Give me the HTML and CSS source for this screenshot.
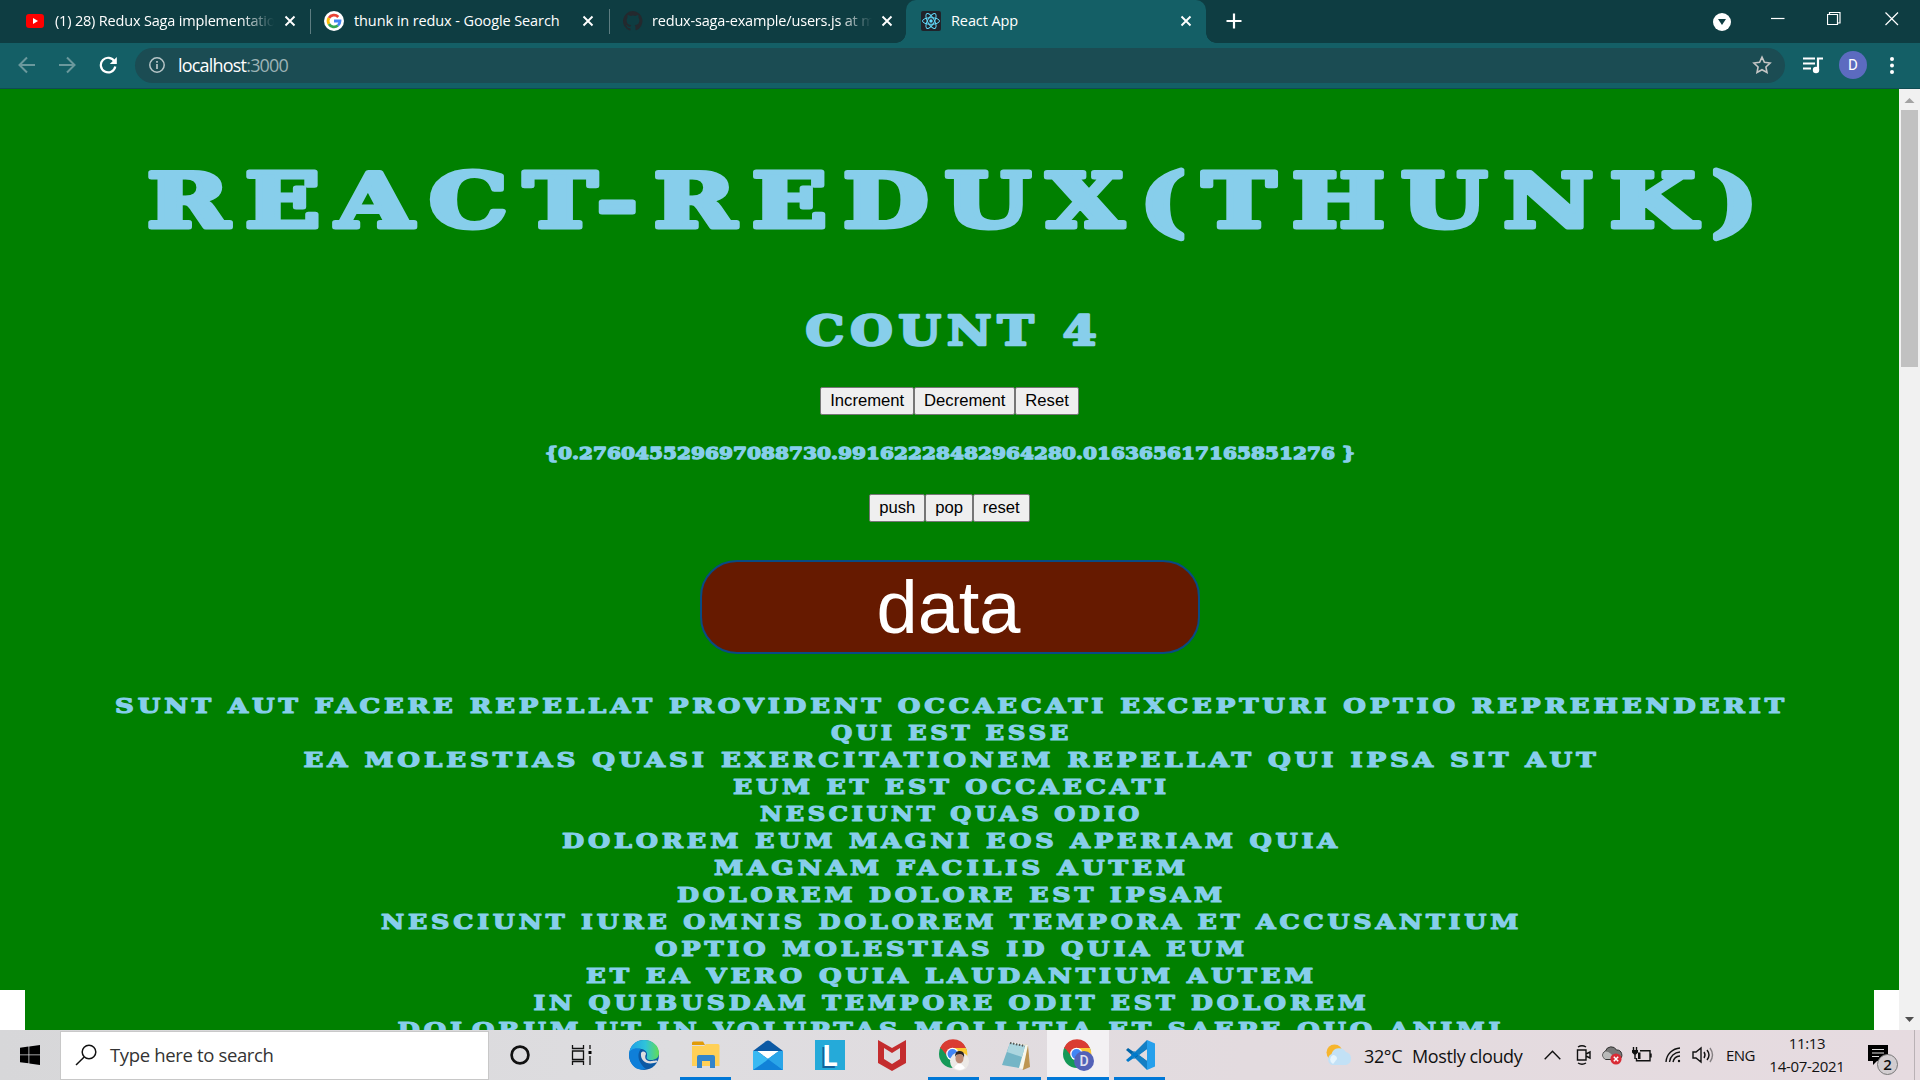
FILE: index.html
```html
<!DOCTYPE html>
<html lang="en">
<head>
<meta charset="utf-8">
<title>React App</title>
<link rel="stylesheet" href="styles.css">
</head>
<body>
<header class="tabs">
  <div class="tab t1">
    <svg width="18" height="14" viewBox="0 0 18 14"><rect width="18" height="14" rx="3" fill="#f00"/><path d="M7 4v6l5-3z" fill="#fff"/></svg>
    <span class="label fade">(1) 28) Redux Saga implementation</span>
    <svg class="x" viewBox="0 0 12 12"><path d="M1.500 1.500l9 9m0-9l-9 9"/></svg>
  </div>
  <div class="tab t2">
    <svg width="20" height="20" viewBox="0 0 20 20"><circle cx="10" cy="10" r="10" fill="#fff"/><g fill="none" stroke-width="2.800"><path d="M14.300 5.900A6 6 0 0 0 4.900 7" stroke="#ea4335"/><path d="M4.900 7a6 6 0 0 0 0 6" stroke="#fbbc05"/><path d="M4.900 13a6 6 0 0 0 9 1.500" stroke="#34a853"/><path d="M13.900 14.500A6 6 0 0 0 16 10H10" stroke="#4285f4"/></g></svg>
    <span class="label">thunk in redux - Google Search</span>
    <svg class="x" viewBox="0 0 12 12"><path d="M1.500 1.500l9 9m0-9l-9 9"/></svg>
  </div>
  <div class="tab t3">
    <svg width="20" height="20" viewBox="0 0 16 16"><path fill="#24292e" d="M8 0a8 8 0 0 0-2.530 15.590c.4.07.55-.17.55-.38v-1.500C3.800 14.200 3.300 12.600 3.300 12.600c-.36-.92-.89-1.170-.89-1.170-.72-.5.06-.48.06-.48.8.06 1.230.82 1.230.82.71 1.220 1.870.87 2.330.66.07-.52.28-.87.5-1.070-1.780-.2-3.640-.89-3.640-3.950 0-.87.31-1.590.82-2.150-.08-.2-.36-1.020.08-2.120 0 0 .67-.22 2.200.82a7.600 7.600 0 0 1 4 0c1.530-1.040 2.200-.82 2.200-.82.44 1.100.16 1.920.08 2.120.51.56.82 1.270.82 2.150 0 3.070-1.870 3.750-3.650 3.950.29.25.54.73.54 1.480v2.200c0 .21.15.46.55.38A8 8 0 0 0 8 0z"/></svg>
    <span class="label fade">redux-saga-example/users.js at master</span>
    <svg class="x" viewBox="0 0 12 12"><path d="M1.500 1.500l9 9m0-9l-9 9"/></svg>
  </div>
  <div class="tab active">
    <svg width="20" height="20" viewBox="0 0 20 20"><rect width="20" height="20" rx="2" fill="#20232a"/><g fill="none" stroke="#61dafb" stroke-width="1"><ellipse cx="10" cy="10" rx="8.500" ry="3.300"/><ellipse cx="10" cy="10" rx="8.500" ry="3.300" transform="rotate(60 10 10)"/><ellipse cx="10" cy="10" rx="8.500" ry="3.300" transform="rotate(120 10 10)"/></g><circle cx="10" cy="10" r="1.700" fill="#61dafb"/></svg>
    <span class="label">React App</span>
    <svg class="x" viewBox="0 0 12 12"><path d="M1.500 1.500l9 9m0-9l-9 9"/></svg>
  </div>
  <svg class="plus" width="16" height="16" viewBox="0 0 16 16"><path d="M8 .5v15M.5 8h15" stroke="#fff" stroke-width="2.200"/></svg>
  <div class="window-controls">
    <svg width="18" height="44" viewBox="0 0 18 44"><circle cx="9" cy="22" r="9" fill="#fff"/><path d="M5 19h8l-4 6z" fill="#0e3d42"/></svg>
    <svg width="14" height="44" viewBox="0 0 14 44"><path d="M0 18.500h13.500"/></svg>
    <svg width="14" height="44" viewBox="0 0 14 44"><path d="M.5 14.500h10v10h-10zM2.500 14v-1.500h10.500v10.500h-2"/></svg>
    <svg width="14" height="44" viewBox="0 0 14 44"><path d="M.5 12.500l12.500 12.500m0-12.500l-12.500 12.500"/></svg>
  </div>
</header>
<nav class="toolbar">
  <svg class="dim" width="18" height="18" viewBox="0 0 18 18"><path d="M17 9H2M9 1.500L1.500 9 9 16.500"/></svg>
  <svg class="dim" width="18" height="18" viewBox="0 0 18 18"><path d="M1 9h15M9 1.500L16.500 9 9 16.500"/></svg>
  <svg width="18" height="18" viewBox="0 0 18 18"><path d="M15.500 5.500A7.300 7.300 0 1 0 16.300 10.500" fill="none" stroke="#fff" stroke-width="2.200"/><path d="M17.800 1v7h-7z" fill="#fff"/></svg>
  <div class="omnibox">
    <svg width="16" height="16" viewBox="0 0 16 16"><circle cx="8" cy="8" r="7.200" fill="none" stroke="#b8c6c8" stroke-width="1.500"/><path d="M8 7v5M8 4v1.700" stroke="#b8c6c8" stroke-width="1.700"/></svg>
    <span class="url">localhost<i>:3000</i></span>
    <svg class="star" width="20" height="20" viewBox="0 0 24 24"><path d="M12 2.500l2.900 6.300 6.800.8-5 4.700 1.300 6.700-6-3.300-6 3.300 1.300-6.700-5-4.700 6.800-.8z" fill="none" stroke="#c5c5c5" stroke-width="1.900"/></svg>
  </div>
  <svg class="media" width="20" height="17" viewBox="0 0 20 17"><path d="M0 1.500h12M0 6.500h12M0 11.500h8M15 13V1.500h5" fill="none" stroke="#fff" stroke-width="2.200"/><circle cx="13" cy="13" r="3.200" fill="#fff"/></svg>
  <span class="avatar">D</span>
  <svg class="dots" width="4" height="17" viewBox="0 0 4 17"><g fill="#fff"><circle cx="2" cy="2" r="2"/><circle cx="2" cy="8.500" r="2"/><circle cx="2" cy="15" r="2"/></g></svg>
</nav>
<div class="viewport">
  <main class="page">
    <svg class="title"><text x="960.500" y="138" textLength="1627" lengthAdjust="spacingAndGlyphs">REACT-REDUX(THUNK)</text></svg>
    <svg class="count"><text x="954" y="86.500" textLength="297" lengthAdjust="spacingAndGlyphs">COUNT 4</text></svg>
    <div class="buttons"><button>Increment</button><button>Decrement</button><button>Reset</button></div>
    <svg class="numbers"><text x="950" y="43.500" textLength="810" lengthAdjust="spacingAndGlyphs">{0.276045529697088730.99162228482964280.016365617165851276 }</text></svg>
    <div class="buttons"><button>push</button><button>pop</button><button>reset</button></div>
    <button class="data">data</button>
    <div class="posts">
      <svg><text x="951.500" y="21" textLength="1673" lengthAdjust="spacingAndGlyphs">SUNT AUT FACERE REPELLAT PROVIDENT OCCAECATI EXCEPTURI OPTIO REPREHENDERIT</text></svg>
      <svg><text x="951.500" y="21" textLength="241" lengthAdjust="spacingAndGlyphs">QUI EST ESSE</text></svg>
      <svg><text x="951.500" y="21" textLength="1296" lengthAdjust="spacingAndGlyphs">EA MOLESTIAS QUASI EXERCITATIONEM REPELLAT QUI IPSA SIT AUT</text></svg>
      <svg><text x="951.500" y="21" textLength="437" lengthAdjust="spacingAndGlyphs">EUM ET EST OCCAECATI</text></svg>
      <svg><text x="951.500" y="21" textLength="383" lengthAdjust="spacingAndGlyphs">NESCIUNT QUAS ODIO</text></svg>
      <svg><text x="951.500" y="21" textLength="779" lengthAdjust="spacingAndGlyphs">DOLOREM EUM MAGNI EOS APERIAM QUIA</text></svg>
      <svg><text x="951.500" y="21" textLength="475" lengthAdjust="spacingAndGlyphs">MAGNAM FACILIS AUTEM</text></svg>
      <svg><text x="951.500" y="21" textLength="549" lengthAdjust="spacingAndGlyphs">DOLOREM DOLORE EST IPSAM</text></svg>
      <svg><text x="951.500" y="21" textLength="1141" lengthAdjust="spacingAndGlyphs">NESCIUNT IURE OMNIS DOLOREM TEMPORA ET ACCUSANTIUM</text></svg>
      <svg><text x="951.500" y="21" textLength="593" lengthAdjust="spacingAndGlyphs">OPTIO MOLESTIAS ID QUIA EUM</text></svg>
      <svg><text x="951.500" y="21" textLength="731" lengthAdjust="spacingAndGlyphs">ET EA VERO QUIA LAUDANTIUM AUTEM</text></svg>
      <svg><text x="951.500" y="21" textLength="836" lengthAdjust="spacingAndGlyphs">IN QUIBUSDAM TEMPORE ODIT EST DOLOREM</text></svg>
      <svg><text x="951" y="21" textLength="1107" lengthAdjust="spacingAndGlyphs">DOLORUM UT IN VOLUPTAS MOLLITIA ET SAEPE QUO ANIMI</text></svg>
    </div>
  </main>
  <aside class="scrollbar">
    <svg width="21" height="21" viewBox="0 0 21 21"><path d="M5.500 14l5-5 5 5z" fill="#a3a3a3"/></svg>
    <div class="thumb"></div>
    <svg width="21" height="21" viewBox="0 0 21 21"><path d="M6 8l4.500 5L15 8z" fill="#505050"/></svg>
  </aside>
</div>
<footer class="taskbar">
  <div class="cell start"><svg width="20" height="20" viewBox="0 0 20 20"><path d="M0 2.800l8.500-1.300v8H0zM9.300 1.400L20 0v9.500H9.300zM0 10.300h8.500v8L0 17.200zM9.300 10.300H20V20L9.300 18.600z"/></svg></div>
  <div class="search"><svg width="22" height="22" viewBox="0 0 22 22"><circle cx="14" cy="8" r="6.800" fill="none" stroke="#111" stroke-width="1.500"/><path d="M9.200 13L1 21" stroke="#111" stroke-width="1.500"/></svg><span>Type here to search</span></div>
  <div class="cell w62"><svg width="22" height="22" viewBox="0 0 22 22"><circle cx="11" cy="11" r="8.400" fill="none" stroke="#111" stroke-width="2.700"/></svg></div>
  <div class="cell w62"><svg width="22" height="20" viewBox="0 0 22 20"><path d="M1.500 0v3.500h11V0M1.500 6h11v8.500h-11zM1.500 20v-3.500h11V20M19 0v4M19 11v9" fill="none" stroke="#111" stroke-width="1.300"/><path d="M17.500 6h3v3h-3z"/></svg></div>
  <div class="cell w62"><svg width="30" height="30" viewBox="0 0 30 30"><defs><linearGradient id="edge"><stop stop-color="#1e9ee8"/><stop offset=".55" stop-color="#2fc3da"/><stop offset="1" stop-color="#62dc56"/></linearGradient></defs><circle cx="15" cy="15" r="15" fill="#0c59a4"/><path d="M0 14C1 5 7 0 15 0c9 0 15 6 15 13 0 5-4 7-8 7-4 0-5-2-4-4 1-5-4-8-9-7C4 9 1 11 0 14z" fill="url(#edge)"/><path d="M0 14c1-5 7-7 12-5-4 4-4 13 5 20C7 32 0 24 0 14z" fill="#0f7fd9"/><path d="M12 13c-1 7 5 12 13 10l4-1-2 3c3-5 2-5-4-4-6 1-8-3-6-7 0-2-3-4-5-1z" fill="#dfdde0"/></svg></div>
  <div class="cell w62 run"><svg width="28" height="28" viewBox="0 0 28 28"><path d="M0 2q0-1.500 1.500-1.500H11l2 3.500H0z" fill="#e19b08"/><path d="M0 5h12l2-2h12q1.500 0 1.500 1.500V25H0z" fill="#ffd057"/><path d="M5 27V16q0-2 2-2h14q2 0 2 2v11h-5v-7h-8v7z" fill="#3385ca"/></svg></div>
  <div class="cell w62"><svg width="30" height="30" viewBox="0 0 30 30"><path d="M0 11L13 1.200q2-1.200 4 0L30 11 15 20z" fill="#0c59a4"/><path d="M4 11h22L15 19z" fill="#fff"/><path d="M0 11l4 0 11 8 11-8h4v19H0z" fill="#39b9f2"/><path d="M15 19L30 30V11h-4z" fill="#2aa5e8"/><path d="M15 19L30 30H0l13-9z" fill="#1182d8"/></svg></div>
  <div class="cell w62"><span class="logo-l">L</span></div>
  <div class="cell w62"><svg width="28" height="32" viewBox="0 0 28 32"><path d="M0 1l14 8 14-8v23l-14 8-14-8zM6 9v11l8 5 8-5V9l-8 5z" fill="#c42c2e" fill-rule="evenodd"/></svg></div>
  <div class="cell w62 run"><svg width="32" height="32" viewBox="0 0 32 32"><circle cx="15" cy="15" r="14" fill="#159957"/><path d="M2 9A14 14 0 0 1 28 9L15 15z" fill="#da3c32"/><path d="M15 9h13a14 14 0 0 1-13 20l5-13z" fill="#fcc934"/><path d="M2.500 8.500L10 18l5-9z" fill="#da3c32"/><circle cx="14.500" cy="15" r="6.300" fill="#fff"/><circle cx="14.500" cy="15" r="5" fill="#4285f4"/><circle cx="21.500" cy="22.500" r="9.500" fill="#ece9e6"/><ellipse cx="21.500" cy="19.500" rx="4" ry="5" fill="#bd8b75"/><path d="M17 18q0-7 5-6 5 0 4 7-1-4-4-4-4 0-5 3z" fill="#2b2422"/><path d="M16 29q5-9 11 0-5 4-11 0z" fill="#fff"/></svg></div>
  <div class="cell w62 run"><svg width="28" height="30" viewBox="0 0 28 30"><path d="M8 3l18 2 2 22-7 3z" fill="#bd9551"/><path d="M8 2l18 3-5 24-5-1z" fill="#f7f7ed"/><path d="M8 3l15 3-6 22L0 25z" fill="#74b5c6"/><path d="M8 3l15 3-3 11L5 12z" fill="#acd6df"/><path d="M8 3l15 3" stroke="#555" stroke-width="2" stroke-dasharray="1.500 1.500"/></svg></div>
  <div class="cell w62 run current"><svg width="32" height="32" viewBox="0 0 32 32"><circle cx="15" cy="15" r="14" fill="#159957"/><path d="M2 9A14 14 0 0 1 28 9L15 15z" fill="#da3c32"/><path d="M15 9h13a14 14 0 0 1-13 20l5-13z" fill="#fcc934"/><path d="M2.500 8.500L10 18l5-9z" fill="#da3c32"/><circle cx="14.500" cy="15" r="6.300" fill="#fff"/><circle cx="14.500" cy="15" r="5" fill="#4285f4"/><circle cx="22" cy="22" r="10" fill="#5362b8"/><text class="badge-d" x="22" y="27">D</text></svg></div>
  <div class="cell w62 run"><svg width="30" height="30" viewBox="0 0 30 30"><path d="M3 8L1 10l21 18V21z" fill="#0065a9"/><path d="M3 22l-2-2L22 2v7z" fill="#007acc"/><path d="M22 0l8 3.500v23L22 30z" fill="#26a0ec"/><path d="M22 0L6 16l3 3L22 9zM22 30L6 14l3-3 13 10z" fill="#147fc4"/></svg></div>
  <div class="tray">
    <svg class="weather" width="26" height="22" viewBox="0 0 26 22"><circle cx="8.500" cy="8.500" r="8" fill="#f7b52d"/><path d="M6 21a6 6 0 0 1-.5-11A8 8 0 0 1 20 8a6.700 6.700 0 0 1 0 13z" fill="#c2e1f6"/><path d="M7 20a5 5 0 0 1 0-9c2 0 4 1 4 4" fill="#e6f5fd"/></svg>
    <span class="temp">32°C</span><span class="sky">Mostly cloudy</span>
    <svg class="chev" width="17" height="10" viewBox="0 0 17 10"><path d="M.7 9.300l7.800-8 7.800 8"/></svg>
    <svg class="cam" width="16" height="20" viewBox="0 0 16 20"><path d="M1.500 5h8.500v10H1.500zM10 9l4-2v6l-4-2M2 2q4-2.500 8 0M2 18q4 2.500 8 0"/></svg>
    <svg class="drive" width="22" height="20" viewBox="0 0 22 20"><path d="M5 14.500a4.500 4.500 0 0 1-.5-8.500 6 6 0 0 1 11-1A5 5 0 0 1 18 14.500z" fill="#777" stroke="#333"/><path d="M4.500 14a4 4 0 0 1 0-7.500q3 0 5 2l6 5.500z" fill="#b9b9b9"/><circle cx="15" cy="14" r="5.600" fill="#d92b35"/><path d="M12.800 11.800l4.400 4.400m0-4.400l-4.400 4.400" stroke="#fff" stroke-width="1.500"/></svg>
    <svg class="bat" width="20" height="16" viewBox="0 0 20 16"><path d="M8 3.700h10v10H4.500V11M19 6.500v4M1.500 0v3M4.500 0v3M3 8v4"/><path d="M0 3h6v2.500L3 8.500 0 5.500zM6 5.500h2.500v6.500H6z" fill="#111" stroke="none"/></svg>
    <svg class="wifi" width="17" height="17" viewBox="0 0 17 17"><path d="M1 15A15 15 0 0 1 15 1M4.500 15A11 11 0 0 1 15 5M8 15A7.500 7.500 0 0 1 15 9"/><circle cx="14" cy="14" r="1.200" fill="#111" stroke="none"/></svg>
    <svg class="vol" width="22" height="18" viewBox="0 0 22 18"><path d="M1 6h3l5-4v14l-5-4H1zM12 6q2 3 0 6M15 4q4 5 0 10"/><path d="M18 2q5 7 0 14" opacity=".45"/></svg>
    <span class="lang">ENG</span>
    <span class="clock"><span>11:13</span><span class="date">14-07-2021</span></span>
    <span class="note"><svg width="20" height="20" viewBox="0 0 20 20"><path d="M0 0h20v16h-11l-4 4v-4H0z" fill="#000"/><path d="M4 4.500h12M4 8h12M4 11.500h7" stroke="#ddd" stroke-width="1.200"/></svg><b>2</b></span>
    <span class="peek"></span>
  </div>
</footer>
</body>
</html>
```
FILE: styles.css
```css
* { box-sizing: border-box; }
body { margin: 0; width: 1920px; height: 1080px; overflow: hidden; display: flex; flex-direction: column; font-family: "Open Sans", "Noto Sans", sans-serif; }
svg { display: block; flex: none; }

.tabs { height: 43px; flex: none; background: #0e3d42; display: flex; color: #fff; }
.tab { display: flex; align-items: center; height: 42px; font-size: 14.500px; letter-spacing: -.1px; white-space: nowrap; position: relative; }
.label { flex: 1; overflow: hidden; padding-bottom: 1px; }
.fade { letter-spacing: -.18px; -webkit-mask-image: linear-gradient(90deg, #000 85%, transparent); mask-image: linear-gradient(90deg, #000 85%, transparent); }
.x { width: 12px; height: 12px; stroke: #fff; stroke-width: 1.900; fill: none; }
.t1 { width: 310px; padding: 0 14px 0 26px; gap: 11px; }
.t1 .x { margin-left: -1px; }
.t2 { width: 299px; padding: 0 15px 0 14px; gap: 10px; }
.t3 { width: 297px; padding: 0 13px 0 14px; gap: 9px; }
.t2::before, .t3::before { content: ""; position: absolute; left: 0; top: 9px; width: 1px; height: 25px; background: #5d7d81; }
.active { width: 300px; height: 43px; padding: 0 14px 1px 15px; gap: 10px; background: #145f66; border-radius: 10px 10px 0 0; }
.active::before, .active::after { content: ""; position: absolute; bottom: 0; width: 10px; height: 10px; }
.active::before { left: -10px; background: radial-gradient(circle at 0 0, transparent 9.500px, #145f66 10px); }
.active::after { right: -10px; background: radial-gradient(circle at 100% 0, transparent 9.500px, #145f66 10px); }
.plus { margin: 13px 0 0 20px; }
.window-controls { margin-left: auto; padding-right: 21px; display: grid; grid-template-columns: 58px 56px 58px 14px; }
.window-controls path { stroke: #fff; stroke-width: 1.200; fill: none; }
.window-controls svg:first-child path { fill: #0e3d42; stroke: none; }

.toolbar { height: 46px; flex: none; background: #145f66; border-bottom: 1px solid #0f4c53; display: flex; align-items: center; padding: 0 26px 1px 18px; }
.dim { fill: none; stroke: #6b999d; stroke-width: 2; margin-right: 22px; }
.dim + .dim { margin-right: 23px; }
.omnibox { width: 1650px; height: 35px; margin-left: 18px; border-radius: 18px; background: #1b4c53; display: flex; align-items: center; padding: 0 13px 0 14px; }
.url { margin-left: 13px; font-size: 18px; letter-spacing: -.8px; color: #fff; line-height: 35px; }
.url i { font-style: normal; color: #9db3b6; }
.star { margin-left: auto; }
.media { margin-left: 18px; }
.avatar { margin-left: 16px; width: 28px; height: 28px; border-radius: 50%; background: #5c6bc0; color: #fff; font: 15px/28px Roboto, sans-serif; text-align: center; }
.dots { margin-left: 23px; }

.viewport { height: 941px; flex: none; display: flex; overflow: hidden; }
.page { width: 1899px; flex: none; display: flex; flex-direction: column; align-items: center; overflow: hidden; background: linear-gradient(#fff, #fff) left bottom / 25px 40px no-repeat, linear-gradient(#fff, #fff) right bottom / 25px 40px no-repeat, #008000; }
.page svg { width: 1899px; overflow: visible; }
.page text { font-family: "DejaVu Serif", serif; font-weight: bold; text-anchor: middle; fill: skyblue; stroke: skyblue; stroke-linejoin: round; }
.title { height: 169px; }
.title text { font-size: 74px; stroke-width: 5px; letter-spacing: 12px; }
.count { height: 129px; }
.count text { font-size: 40.500px; stroke-width: 2.500px; letter-spacing: 5px; }
.numbers { height: 79px; }
.numbers text { font-size: 17.500px; stroke-width: 1.300px; }
.posts { margin-top: 38px; flex: none; }
.posts svg { height: 27px; }
.posts text { font-size: 20px; stroke-width: 1.200px; letter-spacing: 3px; }
.buttons { display: flex; flex: none; height: 28px; }
.buttons button { font: 16.667px "Liberation Sans", Arial, sans-serif; padding: 0 8.900px; border: 1px solid #767676; border-radius: 2px; background: #efefef; color: #000; }
.data { flex: none; margin-top: 38px; width: 500px; height: 94px; border: 2px solid #084b83; border-radius: 37px; background: #661a00; color: #fff; font: 74px/86px "Liberation Sans", Arial, sans-serif; padding: 1px 2px 0 0; }
.scrollbar { width: 21px; background: #f1f1f1; display: flex; flex-direction: column; }
.thumb { height: 257px; margin: 0 2px auto; background: #c1c1c1; }

.taskbar { height: 50px; flex: none; display: flex; background: linear-gradient(90deg, #d7d7d9, #dedde0 35%, #e3dbdf 65%, #e6dbe0); color: #111; }
.cell { height: 50px; display: flex; align-items: center; justify-content: center; flex: none; position: relative; }
.start { width: 60px; }
.search { width: 429px; height: 49px; margin-top: 1px; background: #fff; border: 1px solid #c8c8c8; display: flex; align-items: center; padding: 0 0 2px 14px; gap: 13px; font-size: 18.500px; letter-spacing: -.35px; color: #333; flex: none; }
.w62 { width: 62px; }
.run::after { content: ""; position: absolute; left: 5px; right: 6px; bottom: 0; height: 3px; background: #0078d7; }
.current { background: #f3f1f3; }
.current::after { left: 0; right: 0; }
.logo-l { width: 30px; height: 30px; background: #25aad9; color: #fff; font: bold 28px/30px "Open Sans", sans-serif; text-align: center; text-shadow: -2px 2px #12619b; }
.badge-d { font: 500 14px Roboto, sans-serif; fill: #e2e2ef; text-anchor: middle; }
.tray { margin-left: auto; display: flex; align-items: center; width: 594px; height: 50px; white-space: nowrap; }
.tray > * { flex: none; }
.temp, .sky { font-size: 18px; letter-spacing: -.38px; padding-top: 1px; }
.temp { width: 48px; margin-left: 12px; }
.sky { width: 132px; }
.chev, .cam, .bat, .wifi, .vol { fill: none; stroke: #111; stroke-width: 1.400; }
.cam { margin-left: 15px; }
.drive { margin-left: 9px; }
.bat { margin-left: 9px; }
.wifi { margin-left: 13px; }
.vol { margin-left: 10px; }
.lang { font-size: 15px; letter-spacing: -.6px; width: 30px; margin-left: 12px; }
.clock { width: 90px; margin-left: 6px; display: flex; flex-direction: column; align-items: center; font-size: 15px; line-height: 23px; letter-spacing: -.3px; }
.note { position: relative; margin-left: 16px; }
.note b { position: absolute; left: 9px; top: 9px; width: 21px; height: 21px; border-radius: 50%; background: #d2cdd0; border: 1px solid #777; font: 600 15px/19px "Open Sans", sans-serif; text-align: center; }
.peek { width: 1px; height: 50px; margin-left: 26px; background: #b9b1b5; }
```
